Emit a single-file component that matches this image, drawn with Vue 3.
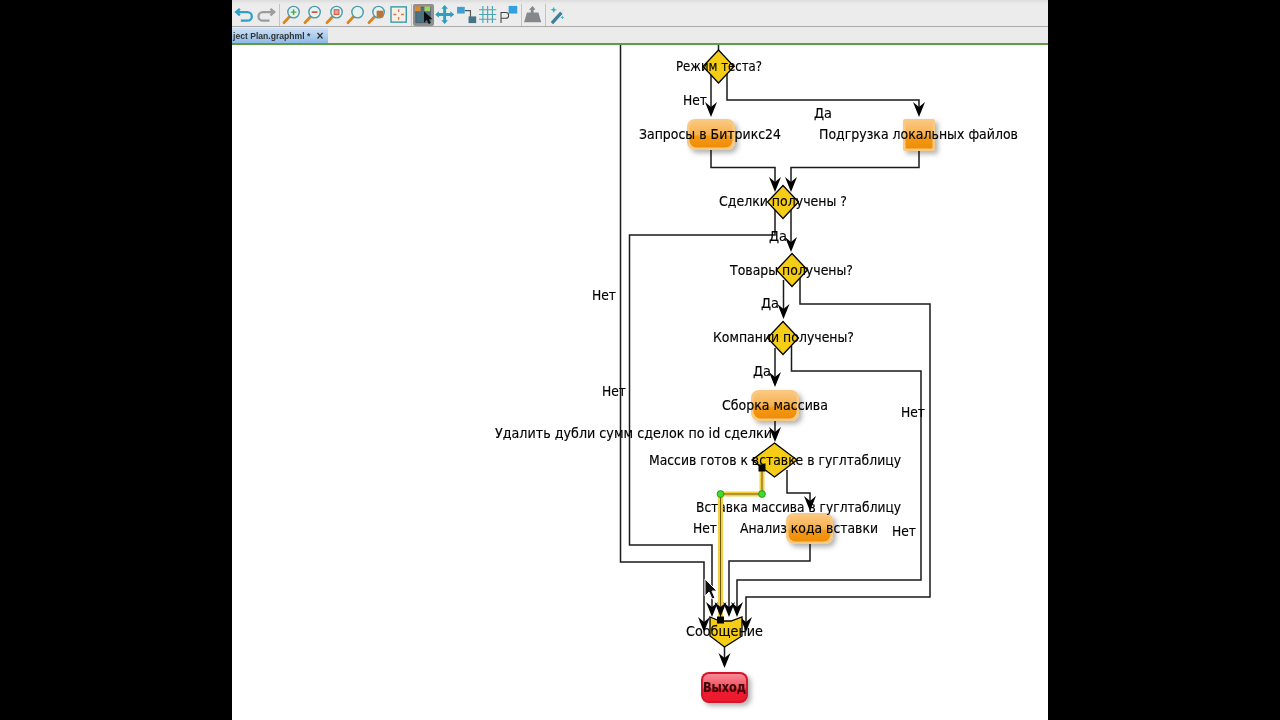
<template>
  <div class="screen">
    <div class="app-window">
      <div class="toolbar">
        <svg class="tool" viewBox="0 0 22 22"><path d="M6 5 2 8.500 6 12M3 8.500h11a4.500 4.500 0 0 1 0 9H7" fill="none" stroke="#2f9fc9" stroke-width="2.400"/></svg>
        <svg class="tool" viewBox="0 0 22 22"><path d="M16 5l4 3.500-4 3.500M19 8.500H8a4.500 4.500 0 0 0 0 9h7" fill="none" stroke="#9a9c9e" stroke-width="2.400"/></svg>
        <span class="sep"></span>
        <svg v-for="z in zoomIcons" :key="z" class="tool" viewBox="0 0 22 22">
          <path d="M3 19.500 9 13" stroke="#d9861f" stroke-width="3" stroke-linecap="round"/>
          <circle cx="13" cy="8.500" r="6" fill="#e8f3ec" stroke="#4c9ab0" stroke-width="1.500"/>
          <path v-if="z === 'in'" d="M10 8.500h6M13 5.500v6" stroke="#4aa84a" stroke-width="1.500"/>
          <path v-if="z === 'out'" d="M10 8.500h6" stroke="#d0584a" stroke-width="1.800"/>
          <rect v-if="z === 'fit'" x="10.500" y="6" width="5" height="5" fill="#e9a08e" stroke="#c9553f"/>
          <rect v-if="z === 'sel'" x="11" y="7" width="7" height="7" fill="#b9743a"/>
        </svg>
        <svg class="tool" viewBox="0 0 22 22">
          <rect x="3" y="3" width="16" height="16" fill="#f4f1e4" stroke="#3c9cae" stroke-width="1.500"/>
          <path d="M11 5.500v3M11 13.500v3M5.500 11h3M13.500 11h3" stroke="#e0705a" stroke-width="1.500"/>
        </svg>
        <span class="sep"></span>
        <div class="tool-active">
          <svg viewBox="0 0 22 22">
            <rect x="3" y="3" width="15" height="16" fill="#4d7282" stroke="#3f5f6d"/>
            <rect x="2" y="2" width="6" height="5" fill="#e08a2c"/>
            <rect x="12" y="2" width="6" height="5" fill="#a6d45e"/>
            <path d="M11.500 7v12l3-3 2 4.500 2-1-2-4h4z" fill="#0c0c0c"/>
          </svg>
        </div>
        <svg class="tool" viewBox="0 0 22 22"><path d="M11 1l3.500 4H12.500v4.500H17V7.500l4 3.500-4 3.500v-2h-4.500V17h2L11 21l-3.500-4h2v-4.500H5v2L1 11l4-3.500v2h4.500V5h-2z" fill="#2f9fbd"/></svg>
        <svg class="tool" viewBox="0 0 22 22">
          <path d="M9 7h6v8" fill="none" stroke="#555" stroke-width="1.200"/>
          <rect x="1" y="3" width="8" height="7" fill="#3f9fd0"/>
          <rect x="13" y="13" width="8" height="7" fill="#47738a"/>
        </svg>
        <svg class="tool" viewBox="0 0 22 22"><path d="M6 2v18M11 2v18M16 2v18M2 6h18M2 11h18M2 16h18" stroke="#4ea3b3" stroke-width="1.200"/></svg>
        <svg class="tool" viewBox="0 0 22 22">
          <path d="M3 20V9h5a2.500 2.500 0 0 1 0 6H3" fill="none" stroke="#444" stroke-width="1.100"/>
          <rect x="11" y="2" width="9" height="8" fill="#33a0e0"/>
        </svg>
        <span class="sep sep-tight"></span>
        <svg class="tool" viewBox="0 0 22 22">
          <path d="M2 19 5 9h4V6H7l4-4 3 4h-2v3h5l3 10z" fill="#85888a"/>
        </svg>
        <span class="sep"></span>
        <svg class="tool" viewBox="0 0 22 22">
          <path d="M5 20 15 9" stroke="#3e7f98" stroke-width="3.400"/>
          <path d="M15 9 18 5.500" stroke="#e6e6e6" stroke-width="3.400"/>
          <path d="M7 3l1 2.500L10.500 6 8 7 7 9.500 6 7 3.500 6 6 5zM16 12l.7 1.500 1.500.5-1.500.7L16 16l-.7-1.300-1.500-.7 1.500-.5z" fill="#35b2c7"/>
        </svg>
      </div>

      <div class="tabbar">
        <div class="tab">
          <span class="tab-name">ject Plan.graphml *</span>
          <span class="tab-close">×</span>
        </div>
      </div>

      <div class="canvas">
        <svg class="diagram" viewBox="232 45 816 675" width="816" height="675">
          <defs>
            <linearGradient id="orange" x1="0" y1="0" x2="0" y2="1">
              <stop offset="0" stop-color="#fac67c" />
              <stop offset="0.5" stop-color="#f8b04e" />
              <stop offset="0.58" stop-color="#f39a17" />
              <stop offset="1" stop-color="#ef8c06" />
            </linearGradient>
            <linearGradient id="red" x1="0" y1="0" x2="0" y2="1">
              <stop offset="0" stop-color="#f98a98" />
              <stop offset="0.5" stop-color="#f2505f" />
              <stop offset="0.58" stop-color="#ee1c30" />
              <stop offset="1" stop-color="#ec1a2e" />
            </linearGradient>
            <filter id="drop" x="-30%" y="-30%" width="170%" height="170%">
              <feDropShadow dx="3" dy="3" stdDeviation="2.500" flood-color="#000" flood-opacity="0.3" />
            </filter>
          </defs>

          <g v-for="(e, i) in edges" :key="i">
            <polyline :points="e.pts" class="edge" />
            <path :d="arrowHead(e.tip)" class="head" />
          </g>

          <polygon v-for="d in diamonds" :key="d.x + '-' + d.y" class="diamond"
            :points="diamondPts(d)" />

          <polygon class="diamond" points="710,617 720,621 731,621 742,617 742,636 724.500,647 710,636" />

          <g v-for="n in nodes" :key="n.x">
            <rect class="node" :x="n.x" :y="n.y" :width="n.w" :height="n.h" :rx="n.rx" filter="url(#drop)" />
            <rect :x="n.x + 2.500" :y="n.y + 2.500" :width="n.w - 5" :height="n.h - 5" :rx="n.rx - 1" fill="url(#orange)" />
          </g>
          <rect class="node-exit" x="701" y="672" width="47" height="31" rx="8" filter="url(#drop)" />
          <rect x="703" y="674" width="43" height="27" rx="6" fill="url(#red)" />

          <text v-for="l in labels" :key="l.t + l.x" class="label" :x="l.x" :y="l.y"
            :textLength="l.w" lengthAdjust="spacingAndGlyphs">{{ l.t }}</text>
          <text class="label label-exit" x="703" y="692" textLength="43" lengthAdjust="spacingAndGlyphs">Выход</text>

          <polyline class="sel-glow" points="762,468 762,494 720.500,494 720.500,620" />
          <polyline class="sel-line" points="762,468 762,494 720.500,494 720.500,620" />
          <path :d="arrowHead([720.500, 617])" class="head" />
          <rect x="758.500" y="464.500" width="7" height="7" fill="#000" />
          <rect x="717" y="616.500" width="7" height="7" fill="#000" />
          <circle class="bend" cx="762" cy="494" r="3.400" />
          <circle class="bend" cx="720.500" cy="494" r="3.400" />

          <path class="cursor" d="M705 579v17l4-4 3 7 3-1-3-7h5z" />
        </svg>
      </div>
    </div>
  </div>
</template>

<script setup>
const zoomIcons = ['in', 'out', 'fit', 'plain', 'sel']

const edges = [
  { pts: '718.500,44 718.500,50', tip: null },
  { pts: '711,74 711,112', tip: [711, 117] },
  { pts: '727,74 727,100 919,100 919,112', tip: [919, 117] },
  { pts: '711,150 711,167.500 775,167.500 775,188', tip: [775, 192] },
  { pts: '919,151 919,167.500 791,167.500 791,188', tip: [791, 192] },
  { pts: '620.500,44 620.500,562 704,562 704,628', tip: [704, 632] },
  { pts: '775,210 775,235 629.500,235 629.500,545 712,545 712,612', tip: [712, 617] },
  { pts: '791,210 791,248', tip: [791, 252] },
  { pts: '783.500,280 783.500,315', tip: [783.500, 319] },
  { pts: '800,278 800,304 930,304 930,597 746,597 746,628', tip: [746, 632] },
  { pts: '775,348 775,383', tip: [775, 387] },
  { pts: '791.500,346 791.500,371 921,371 921,580 737,580 737,612', tip: [737, 617] },
  { pts: '775,421 775,438', tip: [775, 442] },
  { pts: '787,470 787,493 810,493 810,507', tip: [810, 511] },
  { pts: '810,544 810,561 729,561 729,612', tip: [729, 617] },
  { pts: '724.500,647 724.500,664', tip: [724.500, 668] }
]

const diamonds = [
  { x: 718.500, y: 66.500, hw: 15.500, hh: 16.500 },
  { x: 783, y: 202, hw: 15.500, hh: 16.500 },
  { x: 792, y: 270, hw: 15.500, hh: 16.500 },
  { x: 783, y: 338, hw: 15.500, hh: 16.500 },
  { x: 774.500, y: 460, hw: 22.500, hh: 17 }
]

const nodes = [
  { x: 687, y: 119, w: 48, h: 31, rx: 8 },
  { x: 903, y: 119, w: 32, h: 32, rx: 2 },
  { x: 751, y: 390, w: 48, h: 31, rx: 8 },
  { x: 786, y: 513, w: 47, h: 31, rx: 8 }
]

const labels = [
  { t: 'Режим теста?', x: 676, y: 71, w: 86 },
  { t: 'Нет', x: 683, y: 105, w: 24 },
  { t: 'Да', x: 814, y: 118, w: 18 },
  { t: 'Запросы в Битрикс24', x: 639, y: 139, w: 142 },
  { t: 'Подгрузка локальных файлов', x: 819, y: 139, w: 199 },
  { t: 'Сделки получены ?', x: 719, y: 206, w: 128 },
  { t: 'Да', x: 769, y: 241, w: 18 },
  { t: 'Товары получены?', x: 730, y: 275, w: 123 },
  { t: 'Нет', x: 592, y: 300, w: 24 },
  { t: 'Да', x: 761, y: 308, w: 18 },
  { t: 'Компании получены?', x: 713, y: 342, w: 141 },
  { t: 'Да', x: 753, y: 376, w: 18 },
  { t: 'Нет', x: 602, y: 396, w: 24 },
  { t: 'Сборка массива', x: 722, y: 410, w: 106 },
  { t: 'Нет', x: 901, y: 417, w: 24 },
  { t: 'Удалить дубли сумм сделок по id сделки', x: 495, y: 438, w: 277 },
  { t: 'Массив готов к вставке в гуглтаблицу', x: 649, y: 465, w: 252 },
  { t: 'Вставка массива в гуглтаблицу', x: 696, y: 512, w: 205 },
  { t: 'Нет', x: 693, y: 533, w: 24 },
  { t: 'Анализ кода вставки', x: 740, y: 533, w: 138 },
  { t: 'Нет', x: 892, y: 536, w: 24 },
  { t: 'Сообщение', x: 686, y: 636, w: 77 }
]

const diamondPts = (d) =>
  `${d.x},${d.y - d.hh} ${d.x + d.hw},${d.y} ${d.x},${d.y + d.hh} ${d.x - d.hw},${d.y}`

const arrowHead = (tip) => {
  if (!tip) return ''
  const [x, y] = tip
  return `M${x} ${y}L${x - 6} ${y - 15}L${x} ${y - 10}L${x + 6} ${y - 15}Z`
}
</script>

<style scoped>
.screen {
  display: flex;
  justify-content: center;
  width: 1280px;
  height: 720px;
  background: #000;
  overflow: hidden;
}

.app-window {
  display: flex;
  flex-direction: column;
  width: 816px;
  height: 720px;
  background: #fff;
  filter: blur(0.3px);
}

.toolbar {
  display: flex;
  align-items: center;
  height: 27px;
  padding: 3px 0 0 2px;
  box-sizing: border-box;
  background: linear-gradient(#dcdcdc, #ececec 4px);
  border-bottom: 1px solid #a9a9a9;
}

.tool {
  width: 21.300px;
  height: 21px;
  flex: none;
}

.sep {
  width: 1px;
  height: 22px;
  margin: 0 1.500px 0 2px;
  background: #c4c4c4;
  flex: none;
}

.sep-tight {
  margin: 0 0 0 1px;
}

.tool-active {
  width: 21px;
  height: 22px;
  flex: none;
  background: #8f8f8f;
  border-radius: 2px;
}

.tool-active svg {
  display: block;
  width: 21px;
  height: 22px;
}

.tabbar {
  display: flex;
  align-items: flex-end;
  height: 16px;
  background: #ebebeb;
  border-bottom: 2px solid #5f9c46;
}

.tab {
  display: flex;
  align-items: center;
  gap: 6px;
  height: 15px;
  padding: 0 4px 0 1px;
  background: linear-gradient(#cfe0f4, #8fbbe8);
  font-family: "Liberation Sans", Arial, sans-serif;
  font-size: 8.600px;
  font-weight: bold;
  color: #333;
}

.tab-close {
  font-size: 12px;
  line-height: 12px;
  margin-right: 1px;
}

.canvas {
  flex: 1;
  min-height: 0;
  background: #fff;
}

.diagram {
  display: block;
}

.edge {
  fill: none;
  stroke: #1a1a1a;
  stroke-width: 1.500;
}

.head {
  fill: #000;
}

.diamond {
  fill: #f6cd16;
  stroke: #000;
  stroke-width: 1.300;
}

.node {
  fill: #f8c981;
}

.node-exit {
  fill: #d3122a;
}

.label {
  font-family: "DejaVu Sans", sans-serif;
  font-size: 14px;
  fill: #000;
  stroke: #000;
  stroke-width: 0.150;
}

.label-exit {
  font-weight: bold;
  fill: #3d0508;
  stroke: #3d0508;
}

.sel-glow {
  fill: none;
  stroke: #f5d046;
  stroke-width: 5;
}

.sel-line {
  fill: none;
  stroke: #6b5a10;
  stroke-width: 1;
}

.bend {
  fill: #3fdc2e;
  stroke: #1c8a14;
  stroke-width: 0.800;
}

.cursor {
  fill: #111;
  stroke: #fff;
  stroke-width: 1;
}
</style>
